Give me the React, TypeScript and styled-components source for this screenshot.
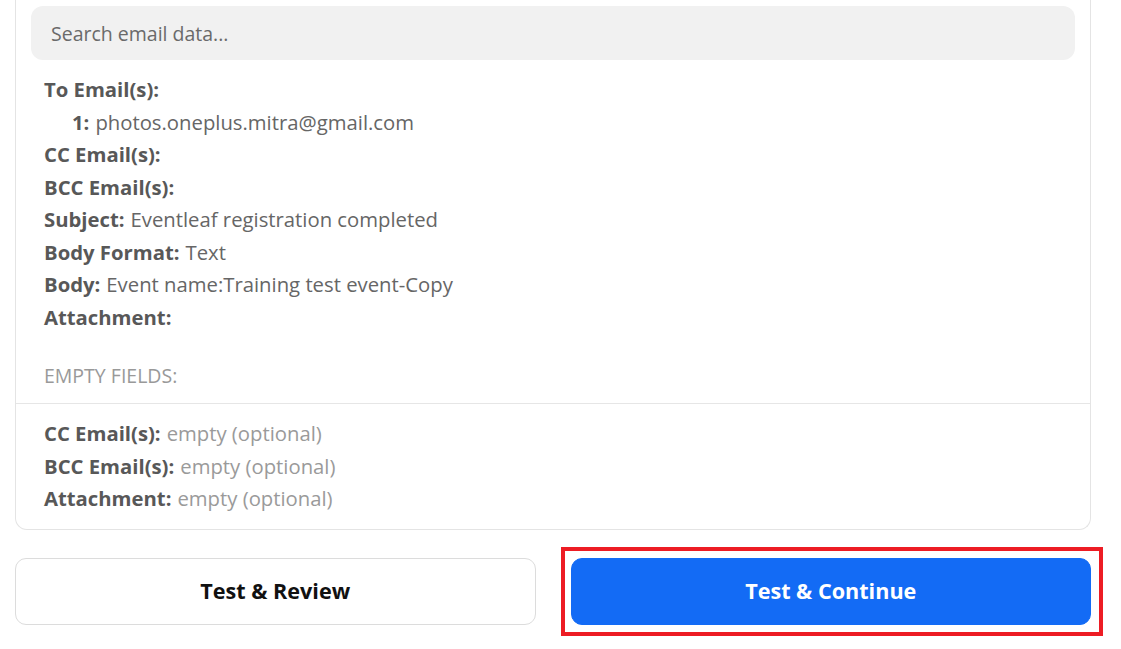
import styled, { createGlobalStyle } from 'styled-components'

const GlobalStyle = createGlobalStyle`
  body {
    margin: 0;
    background: #ffffff;
    font-family: 'Open Sans', 'Liberation Sans', sans-serif;
  }
`

const Page = styled.div`
  width: 1076px;
  padding: 0 0 30px 15px;
`

const Card = styled.div`
  border: 1px solid #e4e4e4;
  border-top: none;
  border-radius: 0 0 12px 12px;
  padding: 6px 0 14px;
`

const Search = styled.input`
  display: block;
  box-sizing: border-box;
  width: calc(100% - 30px);
  margin: 0 15px;
  height: 54px;
  border: none;
  outline: none;
  border-radius: 12px;
  background: #f1f1f1;
  padding: 0 20px;
  font-family: inherit;
  font-size: 19.5px;
  color: #333;

  &::placeholder {
    color: #6a6a6a;
  }
`

const Fields = styled.div`
  padding: 13px 28px 0;
`

const Row = styled.div<{ $indent?: boolean }>`
  font-size: 20.3px;
  line-height: 32.5px;
  color: #666;
  padding-left: ${(p) => (p.$indent ? '28px' : '0')};
  white-space: nowrap;
`

const Label = styled.span`
  font-weight: 700;
  color: #585858;
  margin-right: 6px;
`

const Muted = styled.span`
  color: #9a9a9a;
`

const SectionTitle = styled.div`
  margin-top: 31px;
  padding: 0 28px 15px;
  font-size: 19.5px;
  line-height: 24px;
  color: #999;
  text-transform: uppercase;
`

const Divider = styled.div`
  height: 1px;
  background: #e6e6e6;
`

const Actions = styled.div`
  display: grid;
  grid-template-columns: 1fr 1fr;
  gap: 35px;
  margin-top: 28px;
`

const Button = styled.button<{ $primary?: boolean }>`
  display: block;
  width: 100%;
  height: 67px;
  border-radius: 11px;
  border: 1px solid ${(p) => (p.$primary ? '#136bf5' : '#dcdcdc')};
  background: ${(p) => (p.$primary ? '#136bf5' : '#ffffff')};
  color: ${(p) => (p.$primary ? '#ffffff' : '#111111')};
  font-family: inherit;
  font-size: 21.6px;
  font-weight: 700;
  padding: 0 0 2px;
  cursor: pointer;
`

const Highlight = styled.div`
  position: relative;
`

const Frame = styled.div`
  position: absolute;
  top: -11px;
  right: -12px;
  bottom: -11px;
  left: -10px;
  border: 4px solid #ed1c24;
  pointer-events: none;
`

const filled = [
  { label: 'CC Email(s):' },
  { label: 'BCC Email(s):' },
  { label: 'Subject:', value: 'Eventleaf registration completed' },
  { label: 'Body Format:', value: 'Text' },
  { label: 'Body:', value: 'Event name:Training test event-Copy' },
  { label: 'Attachment:' },
]

const empty = ['CC Email(s):', 'BCC Email(s):', 'Attachment:']

export default function App() {
  return (
    <Page>
      <GlobalStyle />
      <Card>
        <Search placeholder='Search email data...' />
        <Fields>
          <Row>
            <Label>To Email(s):</Label>
          </Row>
          <Row $indent>
            <Label>1:</Label>photos.oneplus.mitra@gmail.com
          </Row>
          {filled.map((f) => (
            <Row key={f.label}>
              <Label>{f.label}</Label>
              {f.value}
            </Row>
          ))}
        </Fields>
        <SectionTitle>Empty fields:</SectionTitle>
        <Divider />
        <Fields>
          {empty.map((label) => (
            <Row key={label}>
              <Label>{label}</Label>
              <Muted>empty (optional)</Muted>
            </Row>
          ))}
        </Fields>
      </Card>
      <Actions>
        <Button>Test &amp; Review</Button>
        <Highlight>
          <Button $primary>Test &amp; Continue</Button>
          <Frame />
        </Highlight>
      </Actions>
    </Page>
  )
}
